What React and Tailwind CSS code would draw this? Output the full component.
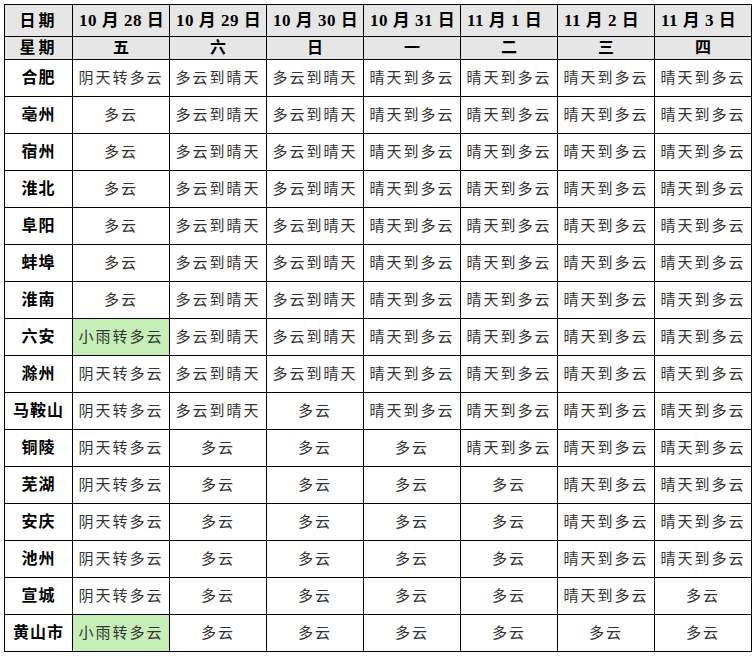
const dates = ['10 月 28 日', '10 月 29 日', '10 月 30 日', '10 月 31 日', '11 月 1 日', '11 月 2 日', '11 月 3 日'];
const weekdays = ['五', '六', '日', '一', '二', '三', '四'];

const A = '阴天转多云';
const B = '多云到晴天';
const C = '晴天到多云';
const D = '多云';
const R = '小雨转多云';

const rows = [
  ['合肥', [A, B, B, C, C, C, C]],
  ['亳州', [D, B, B, C, C, C, C]],
  ['宿州', [D, B, B, C, C, C, C]],
  ['淮北', [D, B, B, C, C, C, C]],
  ['阜阳', [D, B, B, C, C, C, C]],
  ['蚌埠', [D, B, B, C, C, C, C]],
  ['淮南', [D, B, B, C, C, C, C]],
  ['六安', [R, B, B, C, C, C, C]],
  ['滁州', [A, B, B, C, C, C, C]],
  ['马鞍山', [A, B, D, C, C, C, C]],
  ['铜陵', [A, D, D, D, C, C, C]],
  ['芜湖', [A, D, D, D, D, C, C]],
  ['安庆', [A, D, D, D, D, C, C]],
  ['池州', [A, D, D, D, D, C, C]],
  ['宣城', [A, D, D, D, D, C, D]],
  ['黄山市', [R, D, D, D, D, D, D]],
];

const font = { fontFamily: '"Liberation Serif", "Noto Sans CJK SC", serif' };

export default function App() {
  return (
    <div className="bg-white w-[754px] h-[657px] pt-[4px] pl-[4px]" style={font}>
      <table className="table-fixed border-collapse w-[748px] text-black">
        <colgroup>
          <col className="w-[68px]" />
          {dates.map((d) => (
            <col key={d} className="w-[97px]" />
          ))}
        </colgroup>
        <thead>
          <tr className="h-[32px] bg-[#e6e6e6]">
            <th className="border border-black text-[16px] font-bold tracking-[3px]">日期</th>
            {dates.map((d) => (
              <th key={d} className="border border-black text-[17px] font-bold text-left pl-[6px] tracking-[0.5px] whitespace-nowrap">
                {d}
              </th>
            ))}
          </tr>
          <tr className="h-[23px] bg-[#e6e6e6]">
            <th className="border border-black text-[16px] font-bold leading-none tracking-[3px]">星期</th>
            {weekdays.map((w) => (
              <th key={w} className="border border-black text-[16px] leading-none font-bold">
                {w}
              </th>
            ))}
          </tr>
        </thead>
        <tbody>
          {rows.map(([city, vals]) => (
            <tr key={city} className="h-[37px]">
              <td className="border border-black text-center text-[16px] font-bold tracking-[1px] whitespace-nowrap">
                {city}
              </td>
              {vals.map((v, i) => (
                <td
                  key={i}
                  className={`border border-black text-center text-[15px] tracking-[2px] text-[#333] whitespace-nowrap ${
                    v === R ? 'bg-[#c6efb8]' : ''
                  }`}
                >
                  {v}
                </td>
              ))}
            </tr>
          ))}
        </tbody>
      </table>
    </div>
  );
}
